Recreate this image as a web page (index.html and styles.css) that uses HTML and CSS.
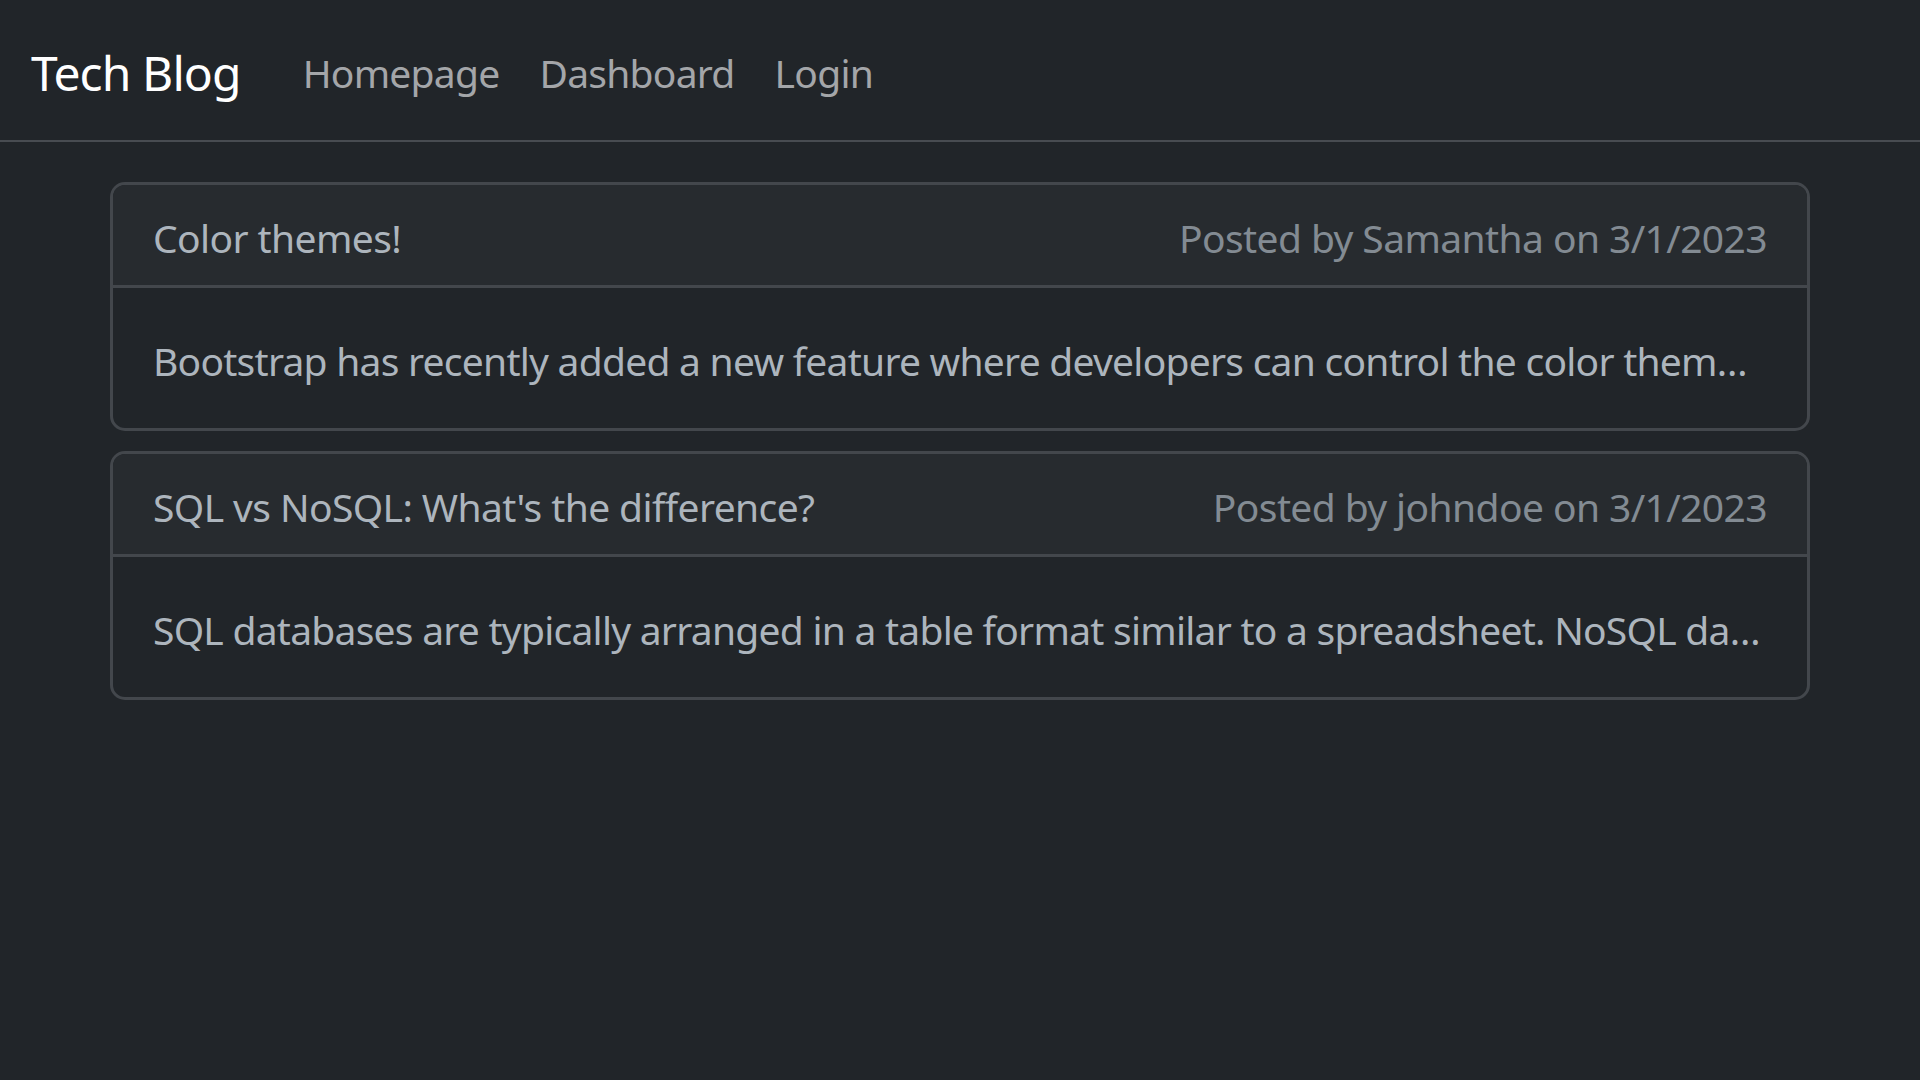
FILE: index.html
```html
<!DOCTYPE html>
<html lang="en">
<head>
<meta charset="utf-8">
<title>Tech Blog</title>
<link rel="stylesheet" href="styles.css">
</head>
<body>
<nav class="navbar">
  <a class="brand" href="#">Tech Blog</a>
  <ul class="nav">
    <li><a class="nav-link" href="#">Homepage</a></li>
    <li><a class="nav-link" href="#">Dashboard</a></li>
    <li><a class="nav-link" href="#">Login</a></li>
  </ul>
</nav>
<main class="posts">
  <article class="card">
    <header class="card-header">
      <span class="title">Color themes!</span>
      <span class="meta">Posted by Samantha on 3/1/2023</span>
    </header>
    <div class="card-body">
      <p class="excerpt">Bootstrap has recently added a new feature where developers can control the color them…</p>
    </div>
  </article>
  <article class="card">
    <header class="card-header">
      <span class="title">SQL vs NoSQL: What's the difference?</span>
      <span class="meta">Posted by johndoe on 3/1/2023</span>
    </header>
    <div class="card-body">
      <p class="excerpt">SQL databases are typically arranged in a table format similar to a spreadsheet. NoSQL da…</p>
    </div>
  </article>
</main>
</body>
</html>
```
FILE: styles.css
```css
* { box-sizing: border-box; }
html, body {
  margin: 0;
  padding: 0;
  background: #212529;
  min-height: 100%;
}
body {
  font-family: "Noto Sans", "Open Sans", sans-serif;
  color: #adb5bd;
  height: 1080px;
}
a { text-decoration: none; }

.navbar {
  height: 142px;
  display: flex;
  align-items: center;
  padding: 6px 30px 0 31px;
  border-bottom: 2px solid #484c51;
}
.brand {
  color: #ffffff;
  font-size: 48px;
  line-height: 60px;
  margin-right: 62px;
  letter-spacing: -0.9px;
}
.nav {
  display: flex;
  list-style: none;
  margin: 0;
  padding: 0;
  margin-left: -20px;
}
.nav-link {
  display: block;
  color: #a4a6a9;
  font-size: 39px;
  line-height: 60px;
  padding: 0 20px;
  letter-spacing: -0.75px;
}

.posts {
  padding: 40px 110px 0;
  display: flex;
  flex-direction: column;
  gap: 20px;
}
.card {
  border: 3px solid #43474c;
  border-radius: 15px;
  overflow: hidden;
}
.card-header {
  display: flex;
  justify-content: space-between;
  align-items: center;
  height: 103px;
  padding: 4px 40px 0;
  background: #272b2f;
  border-bottom: 3px solid #43474c;
  font-size: 39px;
  letter-spacing: -0.6px;
}
.title { color: #adb5bd; }
.meta { color: #838b93; }
.card-body {
  height: 140px;
  padding: 43px 40px 37px;
  display: flex;
  align-items: center;
}
.excerpt {
  margin: 0;
  font-size: 39px;
  line-height: 60px;
  letter-spacing: -0.75px;
  white-space: nowrap;
  overflow: hidden;
  text-overflow: ellipsis;
}
```
